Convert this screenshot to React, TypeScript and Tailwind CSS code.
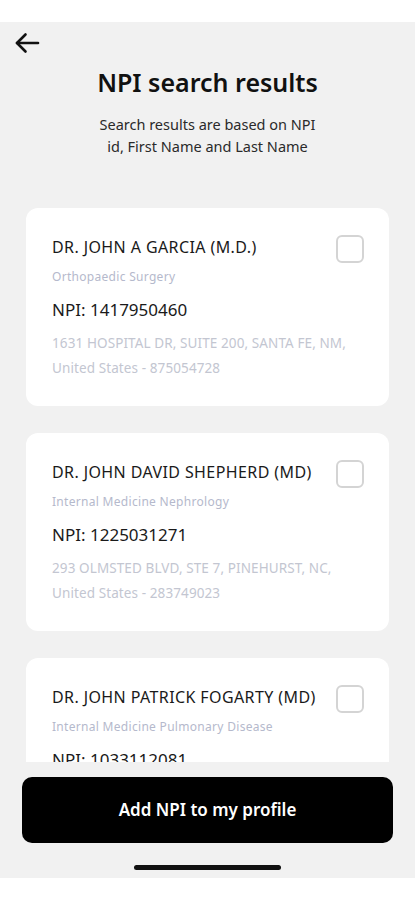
import type { ReactElement } from 'react'

interface Provider {
  id: string
  name: string
  specialty: string
  npi: string
  addressLine: string
  countryLine: string
}

const providers: Provider[] = [
  {
    id: 'garcia',
    name: 'DR. JOHN A GARCIA (M.D.)',
    specialty: 'Orthopaedic Surgery',
    npi: '1417950460',
    addressLine: '1631 HOSPITAL DR, SUITE 200, SANTA FE, NM,',
    countryLine: 'United States - 875054728',
  },
  {
    id: 'shepherd',
    name: 'DR. JOHN DAVID SHEPHERD (MD)',
    specialty: 'Internal Medicine Nephrology',
    npi: '1225031271',
    addressLine: '293 OLMSTED BLVD, STE 7, PINEHURST, NC,',
    countryLine: 'United States - 283749023',
  },
  {
    id: 'fogarty',
    name: 'DR. JOHN PATRICK FOGARTY (MD)',
    specialty: 'Internal Medicine Pulmonary Disease',
    npi: '1033112081',
    addressLine: '1 MEDICAL CENTER DR, ANYTOWN, NC,',
    countryLine: 'United States - 283749023',
  },
]

function BackArrow(): ReactElement {
  return (
    <svg width="26" height="22" viewBox="0 0 26 22" fill="none" stroke="#111" strokeWidth="2.6" strokeLinecap="round" strokeLinejoin="round">
      <path d="M24 11H3" />
      <path d="M11.5 2.5 3 11l8.5 8.5" />
    </svg>
  )
}

function ProviderCard({ provider }: { provider: Provider }): ReactElement {
  return (
    <div className="shrink-0 rounded-[12px] bg-white pl-[26px] pr-[25px] pt-[27px] pb-[25px]">
      <div className="flex items-start justify-between">
        <div className="pt-[2px] text-[16px] leading-[20px] tracking-[0.4px] text-[#1a1a1a]">{provider.name}</div>
        <div className="h-[28px] w-[28px] shrink-0 rounded-[6px] border-2 border-[#d4d4d4] bg-white" />
      </div>
      <div className="mt-[6px] text-[12px] leading-[16px] tracking-[0.3px] text-[#b5b9cc]">{provider.specialty}</div>
      <div className="mt-[14px] text-[17px] leading-[22px] text-[#1a1a1a]">NPI: {provider.npi}</div>
      <div className="mt-[10px] whitespace-nowrap text-[13.5px] leading-[25px] tracking-[0.1px] text-[#c3c6d1]">
        <div>{provider.addressLine}</div>
        <div>{provider.countryLine}</div>
      </div>
    </div>
  )
}

export default function App(): ReactElement {
  return (
    <div className="flex h-[900px] w-[415px] flex-col overflow-hidden bg-white font-['Noto_Sans',sans-serif]">
      <div className="h-[22px] shrink-0 bg-white" />
      <div className="flex h-[856px] flex-col bg-[#f1f1f1]">
        <div className="px-[14px] pt-[10px]">
          <BackArrow />
        </div>
        <h1 className="mt-[12px] text-center text-[25px] font-semibold leading-[32px] text-[#111]">NPI search results</h1>
        <p className="mx-auto mt-[15px] w-[226px] text-center text-[14.5px] leading-[22px] text-[#2a2a2a]">
          Search results are based on NPI id, First Name and Last Name
        </p>
        <div className="mt-[51px] flex h-[554px] flex-col gap-[27px] overflow-hidden px-[26px]">
          {providers.map((p) => (
            <ProviderCard key={p.id} provider={p} />
          ))}
        </div>
        <div className="px-[22px] pt-[15px]">
          <button className="flex h-[66px] w-full items-center justify-center rounded-[10px] bg-black text-[17px] font-semibold leading-[24px] text-white">
            Add NPI to my profile
          </button>
        </div>
        <div className="mt-[22px] flex justify-center">
          <div className="h-[5px] w-[147px] rounded-full bg-[#111]" />
        </div>
      </div>
      <div className="flex-1 bg-white" />
    </div>
  )
}
